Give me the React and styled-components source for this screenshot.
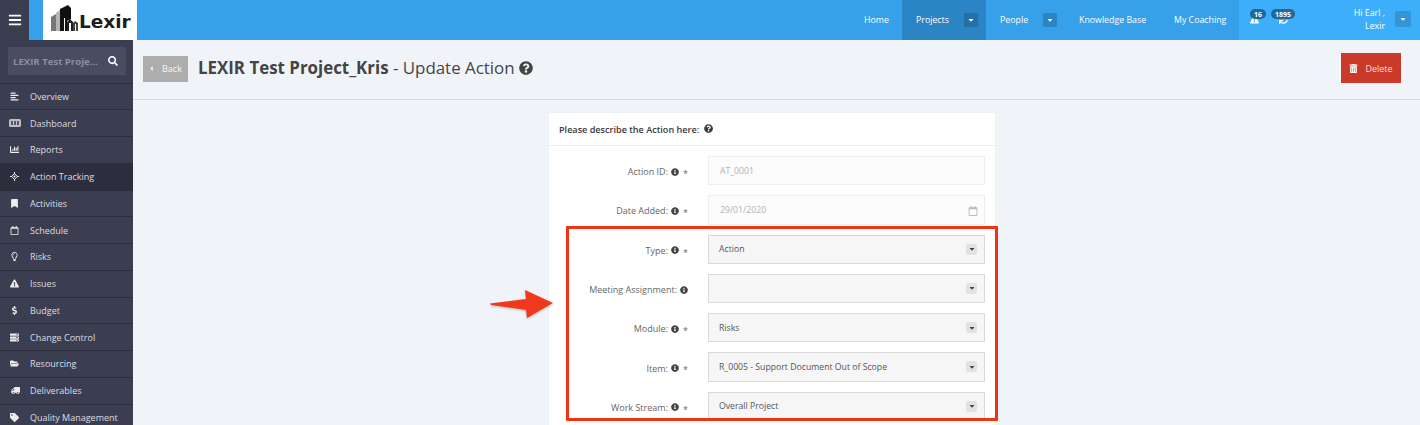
import React from "react";
import styled, { createGlobalStyle } from "styled-components";
import {
  FaAlignLeft,
  FaBars,
  FaBookmark,
  FaCaretDown,
  FaCaretLeft,
  FaChartBar,
  FaDollarSign,
  FaExclamationTriangle,
  FaFolderOpen,
  FaInfoCircle,
  FaQuestionCircle,
  FaRegCalendar,
  FaRegLightbulb,
  FaSearch,
  FaServer,
  FaSync,
  FaTag,
  FaTrashAlt,
  FaTruck,
} from "react-icons/fa";

const DashboardIcon = () => (
  <svg width="12" height="8" viewBox="0 0 12 8">
    <rect width="12" height="8" rx="1.5" fill="#bdbdc4" />
    <path d="M2 2h2v4H2zM5 2h2v4H5zM8 2h2v4H8z" fill="#55586a" />
  </svg>
);

const TrackingIcon = () => (
  <svg width="9" height="9" viewBox="0 0 9 9">
    <path d="M4.5 1.6 7.4 4.5 4.5 7.4 1.6 4.5z" fill="none" stroke="#eceded" />
    <path d="M4 0h1v2H4zM4 7h1v2H4zM0 4h2v1H0zM7 4h2v1H7z" fill="#eceded" />
    <circle cx="4.5" cy="4.5" r="1" fill="#eceded" />
  </svg>
);

const menu = [
  { label: "Overview", icon: FaAlignLeft },
  { label: "Dashboard", icon: DashboardIcon },
  { label: "Reports", icon: FaChartBar },
  { label: "Action Tracking", icon: TrackingIcon, active: true },
  { label: "Activities", icon: FaBookmark },
  { label: "Schedule", icon: FaRegCalendar },
  { label: "Risks", icon: FaRegLightbulb },
  { label: "Issues", icon: FaExclamationTriangle },
  { label: "Budget", icon: FaDollarSign },
  { label: "Change Control", icon: FaServer },
  { label: "Resourcing", icon: FaFolderOpen },
  { label: "Deliverables", icon: FaTruck, flip: true },
  { label: "Quality Management", icon: FaTag },
];

const fields = [
  { label: "Action ID:", value: "AT_0001", required: true, disabled: true },
  { label: "Date Added:", value: "29/01/2020", required: true, disabled: true, date: true },
  { label: "Type:", value: "Action", required: true },
  { label: "Meeting Assignment:", value: "" },
  { label: "Module:", value: "Risks", required: true },
  { label: "Item:", value: "R_0005 - Support Document Out of Scope", required: true },
  { label: "Work Stream:", value: "Overall Project", required: true },
];

const Logo = () => (
  <LogoBox>
    <svg width="30" height="28" viewBox="0 0 30 28">
      <path d="M1 27V13l5-3v17z" fill="#777" />
      <path d="M6 27V9l4-3v21z" fill="#b5b5b5" />
      <path d="M10 27V5l8-4 3 3v11l-4 2v10h-2V14h-1v13z" fill="#111" />
      <path d="M17 27v-9l3-3 3 3v9h-2v-8h-2v8z" fill="#222" />
      <path d="M23 27v-8l2-2 3 2v8h-2v-7h-1v7z" fill="#444" />
    </svg>
    <LogoText>Lexir</LogoText>
  </LogoBox>
);

const App = () => {
  return (
    <Page>
      <GlobalStyle />
      <Header>
        <Burger>
          <FaBars />
        </Burger>
        <Logo />
        <Spacer />
        <NavItem $width={52}>Home</NavItem>
        <NavItem $width={84} $active>
          Projects
          <CaretBox $active>
            <FaCaretDown />
          </CaretBox>
        </NavItem>
        <NavItem $width={79}>
          People
          <CaretBox>
            <FaCaretDown />
          </CaretBox>
        </NavItem>
        <NavItem $width={95}>Knowledge Base</NavItem>
        <NavItem $width={79}>My Coaching</NavItem>
        <UserArea>
          <Alert $width={21} $inset={0}>
            <FaExclamationTriangle />
            <Badge>16</Badge>
          </Alert>
          <Alert $width={29} $inset={8}>
            <FaSync />
            <Badge>1895</Badge>
          </Alert>
          <UserName>
            Hi Earl ,
            <br />
            Lexir
          </UserName>
          <UserCaret>
            <FaCaretDown />
          </UserCaret>
        </UserArea>
      </Header>

      <Body>
        <Sidebar>
          <SearchWrap>
            <SearchBox>
              <SearchText>LEXIR Test Proje...</SearchText>
              <FaSearch />
            </SearchBox>
          </SearchWrap>
          {menu.map((item) => (
            <MenuItem key={item.label} $active={item.active}>
              <MenuIcon $flip={item.flip}>
                <item.icon />
              </MenuIcon>
              {item.label}
            </MenuItem>
          ))}
        </Sidebar>

        <Main>
          <PageHead>
            <BackButton>
              <FaCaretLeft />
              Back
            </BackButton>
            <Title>
              <strong>LEXIR Test Project_Kris</strong> - Update Action <FaQuestionCircle />
            </Title>
            <DeleteButton>
              <FaTrashAlt />
              Delete
            </DeleteButton>
          </PageHead>

          <Card>
            <CardHead>
              Please describe the Action here: <FaQuestionCircle />
            </CardHead>
            <FormBody>
              {fields.map((field) => (
                <Row key={field.label}>
                  <Label $required={field.required}>
                    {field.label} <FaInfoCircle />
                    {field.required && <Star>*</Star>}
                  </Label>
                  <Control $disabled={field.disabled}>
                    {field.value}
                    {field.date && (
                      <DateIcon>
                        <FaRegCalendar />
                      </DateIcon>
                    )}
                    {!field.disabled && (
                      <SelectCaret>
                        <FaCaretDown />
                      </SelectCaret>
                    )}
                  </Control>
                </Row>
              ))}
            </FormBody>
          </Card>
        </Main>
      </Body>

      <Highlight />
      <Arrow width="70" height="34" viewBox="0 0 70 34">
        <path d="M1 15.5 37 11 36 2 64 15 38 30 37 22 2 17z" fill="#f0391c" />
      </Arrow>
    </Page>
  );
};

export default App;

const GlobalStyle = createGlobalStyle`
  html, body {
    margin: 0;
    padding: 0;
    background: #f0f4f8;
  }
  * {
    box-sizing: border-box;
  }
`;

const Page = styled.div`
  position: relative;
  width: 1420px;
  height: 425px;
  overflow: hidden;
  font-family: "Open Sans", sans-serif;
  font-size: 9px;
  color: #555;
`;

const Header = styled.header`
  display: flex;
  height: 40px;
  background: #36a0ea;
  color: #fff;
  font-size: 8.8px;
`;

const Burger = styled.div`
  width: 29px;
  display: flex;
  align-items: center;
  justify-content: center;
  background: #3b3e50;
  font-size: 14px;
`;

const LogoBox = styled.div`
  width: 94px;
  margin-left: 14px;
  padding: 4px 0 0 7px;
  display: flex;
  align-items: flex-start;
  background: #fff;
`;

const LogoText = styled.span`
  margin: 7px 0 0 -1px;
  font-family: "DejaVu Sans", sans-serif;
  font-size: 18.5px;
  line-height: 22px;
  font-weight: 700;
  color: #1c1c1c;
`;

const Spacer = styled.div`
  flex: 1;
`;

const NavItem = styled.div`
  width: ${(p) => p.$width}px;
  padding-left: 14px;
  display: flex;
  align-items: center;
  white-space: nowrap;
  background: ${(p) => (p.$active ? "#2b84c4" : "transparent")};
`;

const CaretBox = styled.span`
  width: 14px;
  height: 14px;
  margin-left: 15px;
  display: flex;
  align-items: center;
  justify-content: center;
  border-radius: 2px;
  font-size: 8px;
  background: ${(p) => (p.$active ? "#246fa6" : "#2b84c4")};
`;

const UserArea = styled.div`
  width: 181px;
  padding-left: 11px;
  display: flex;
  background: #3daefa;
`;

const Alert = styled.div`
  position: relative;
  width: ${(p) => p.$width}px;
  padding: 15px 0 0 ${(p) => p.$inset}px;
  display: flex;
  font-size: 9px;
`;

const Badge = styled.span`
  position: absolute;
  top: 9px;
  left: 0;
  right: 5px;
  height: 10px;
  padding: 0 3px;
  display: flex;
  align-items: center;
  justify-content: center;
  border-radius: 5px;
  background: #22679b;
  font-size: 7px;
  font-weight: 700;
`;

const UserName = styled.div`
  margin-left: auto;
  padding-top: 7px;
  text-align: right;
  line-height: 12.5px;
`;

const UserCaret = styled.span`
  width: 16px;
  height: 16px;
  margin: 11px 9px 0 10px;
  display: flex;
  align-items: center;
  justify-content: center;
  border-radius: 2px;
  font-size: 8px;
  background: #3594d8;
`;

const Body = styled.div`
  display: flex;
  height: 385px;
`;

const Sidebar = styled.nav`
  width: 133px;
  flex-shrink: 0;
  background: #3b3e50;
  color: #dcdde2;
`;

const SearchWrap = styled.div`
  height: 43.6px;
  padding: 7px 7px 0 8px;
  border-bottom: 1px solid #2d2f3f;
`;

const SearchBox = styled.div`
  height: 28px;
  padding: 0 8px 0 5px;
  display: flex;
  align-items: center;
  justify-content: space-between;
  background: #4a4c62;
  color: #fff;
  font-size: 10px;
`;

const SearchText = styled.span`
  white-space: nowrap;
  font-size: 9.6px;
  font-weight: 700;
  color: #8d8e9f;
`;

const MenuItem = styled.div`
  height: 26.75px;
  display: flex;
  align-items: center;
  white-space: nowrap;
  border-bottom: 1px solid #2d2f3f;
  background: ${(p) => (p.$active ? "#2c2e3e" : "transparent")};
`;

const MenuIcon = styled.span`
  width: 30px;
  padding-right: 1px;
  display: flex;
  justify-content: center;
  font-size: 9px;
  color: #eceded;
  transform: ${(p) => (p.$flip ? "scaleX(-1)" : "none")};
`;

const Main = styled.main`
  flex: 1;
  min-width: 0;
`;

const PageHead = styled.div`
  height: 60px;
  padding: 0 19px 0 10px;
  display: flex;
  align-items: center;
  border-bottom: 1px solid #d6dade;
`;

const BackButton = styled.div`
  width: 45px;
  height: 26px;
  margin-top: -2px;
  padding-left: 5px;
  display: flex;
  align-items: center;
  gap: 7px;
  background: #adadad;
  color: #f5f5f5;
  font-size: 9px;

  svg {
    font-size: 7px;
  }
`;

const Title = styled.h1`
  margin: -5px 0 0 10px;
  font-size: 16.9px;
  font-weight: 400;
  color: #444;

  strong {
    font-weight: 700;
  }

  svg {
    font-size: 14px;
    vertical-align: -1px;
  }
`;

const DeleteButton = styled.div`
  width: 60px;
  height: 30px;
  margin: -3px 0 0 auto;
  display: flex;
  align-items: center;
  justify-content: center;
  gap: 7px;
  background: #cb3a28;
  color: #f7dcd8;

  svg {
    font-size: 9px;
    color: #fff;
  }
`;

const Card = styled.section`
  width: 446px;
  height: 400px;
  margin: 13px 0 0 416px;
  background: #fff;
  box-shadow: 0 0 1px #dfe3e6;
`;

const CardHead = styled.div`
  height: 33px;
  padding-left: 10px;
  display: flex;
  align-items: center;
  gap: 5px;
  border-bottom: 1px solid #ececec;
  color: #3a3a3a;
  font-size: 9.1px;
  font-weight: 600;
`;

const FormBody = styled.div`
  padding: 10px 10px 0 0;
  display: grid;
  grid-auto-rows: 29.3px;
  row-gap: 10px;
`;

const Row = styled.div`
  display: grid;
  grid-template-columns: 159px 1fr;
`;

const Label = styled.div`
  position: relative;
  padding-top: 2px;
  padding-right: ${(p) => (p.$required ? "29px" : "20px")};
  display: flex;
  align-items: center;
  justify-content: flex-end;
  gap: 3px;
  color: #666;

  svg {
    font-size: 8px;
    color: #444;
  }
`;

const Star = styled.span`
  position: absolute;
  right: 20px;
  top: 11px;
  color: #666;
`;

const Control = styled.div`
  position: relative;
  padding-left: ${(p) => (p.$disabled ? "11px" : "10px")};
  display: flex;
  align-items: center;
  justify-content: space-between;
  border: 1px solid ${(p) => (p.$disabled ? "#eeeeee" : "#d9d9d9")};
  background: ${(p) => (p.$disabled ? "#fcfcfc" : "#f6f6f6")};
  color: ${(p) => (p.$disabled ? "#b0b0b0" : "#555")};
  font-size: 8.7px;
`;

const SelectCaret = styled.span`
  position: absolute;
  right: 7px;
  top: 8px;
  width: 11px;
  height: 11px;
  display: flex;
  align-items: center;
  justify-content: center;
  border-radius: 2px;
  background: #e2e2e2;
  color: #444;
  font-size: 8px;
`;

const DateIcon = styled.span`
  position: absolute;
  right: 6px;
  top: 9px;
  color: #bbb;
  font-size: 10px;
`;

const Highlight = styled.div`
  position: absolute;
  left: 566px;
  top: 226px;
  width: 432px;
  height: 195px;
  border: 3px solid #ee3414;
  border-radius: 1px;
`;

const Arrow = styled.svg`
  position: absolute;
  left: 489px;
  top: 288px;
  filter: drop-shadow(0 1px 1px rgba(0, 0, 0, 0.25));
`;
